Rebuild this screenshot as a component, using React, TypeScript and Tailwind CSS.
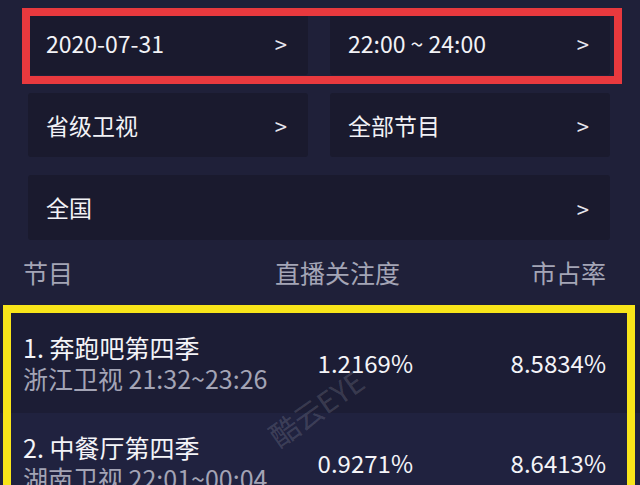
const cjk = "font-['Noto_Sans_CJK_SC',_'Noto_Sans',_sans-serif]";

const Card = ({ label, wide }: { label: string; wide?: boolean }) => (
  <div className={`flex items-center justify-between bg-[#1a1a2e] rounded-[3px] pl-[18px] pr-[21px] ${wide ? "h-[65px]" : "h-[64px]"}`}>
    <span className="text-[23px] text-[#f2f2f6] leading-none">{label}</span>
    <span className="text-[22px] text-[#e6e6ee] leading-none">&gt;</span>
  </div>
);

const rows = [
  { title: "1. 奔跑吧第四季", sub: "浙江卫视 21:32~23:26", focus: "1.2169%", share: "8.5834%", bg: "bg-[#1c1d35]" },
  { title: "2. 中餐厅第四季", sub: "湖南卫视 22:01~00:04", focus: "0.9271%", share: "8.6413%", bg: "bg-[#20223f]" },
];

export default function App() {
  return (
    <div className={`relative w-[640px] h-[485px] overflow-hidden bg-[#1f2039] ${cjk}`}>
      {/* filters */}
      <div className="flex flex-col gap-[18px] pt-[11px] pl-[28px] pr-[30px]">
        <div className="grid grid-cols-2 gap-[22px]">
          <Card label="2020-07-31" />
          <Card label="22:00 ~ 24:00" />
        </div>
        <div className="grid grid-cols-2 gap-[22px]">
          <Card label="省级卫视" />
          <Card label="全部节目" />
        </div>
        <Card label="全国" wide />
      </div>

      {/* table header */}
      <div className="flex items-center h-[65px] pl-[23px] pr-[34px] text-[25px] text-[#a4a5b6] leading-none">
        <span className="flex-1">节目</span>
        <span className="text-right mr-[56px]">直播关注度</span>
        <span className="w-[150px] text-right">市占率</span>
      </div>

      {/* table rows */}
      <div className="relative pt-[8px] bg-[#1c1d35]">
        {rows.map((r) => (
          <div key={r.title} className={`flex items-center h-[100px] pl-[23px] pr-[34px] ${r.bg}`}>
            <div className="flex-1 flex flex-col">
              <span className="text-[25px] leading-[31px] text-[#f4f4f8]">{r.title}</span>
              <span className="text-[25px] leading-[31px] text-[#a3a4b5]">{r.sub}</span>
            </div>
            <span className="text-[24px] leading-none text-[#f4f4f8] mr-[43px]">{r.focus}</span>
            <span className="w-[150px] text-right text-[24px] leading-none text-[#f4f4f8]">{r.share}</span>
          </div>
        ))}
        <div className="absolute left-[262px] top-[88px] -rotate-[35deg] text-[29px] text-white/15 leading-none select-none">
          酷云EYE
        </div>
      </div>

      {/* annotation boxes */}
      <div className="absolute left-[22px] top-[8px] w-[600px] h-[76px] border-[8px] border-[#e8393e]" />
      <div className="absolute left-[3px] top-[305px] w-[632px] h-[220px] border-[8px] border-[#f8e51a]" />
    </div>
  );
}
